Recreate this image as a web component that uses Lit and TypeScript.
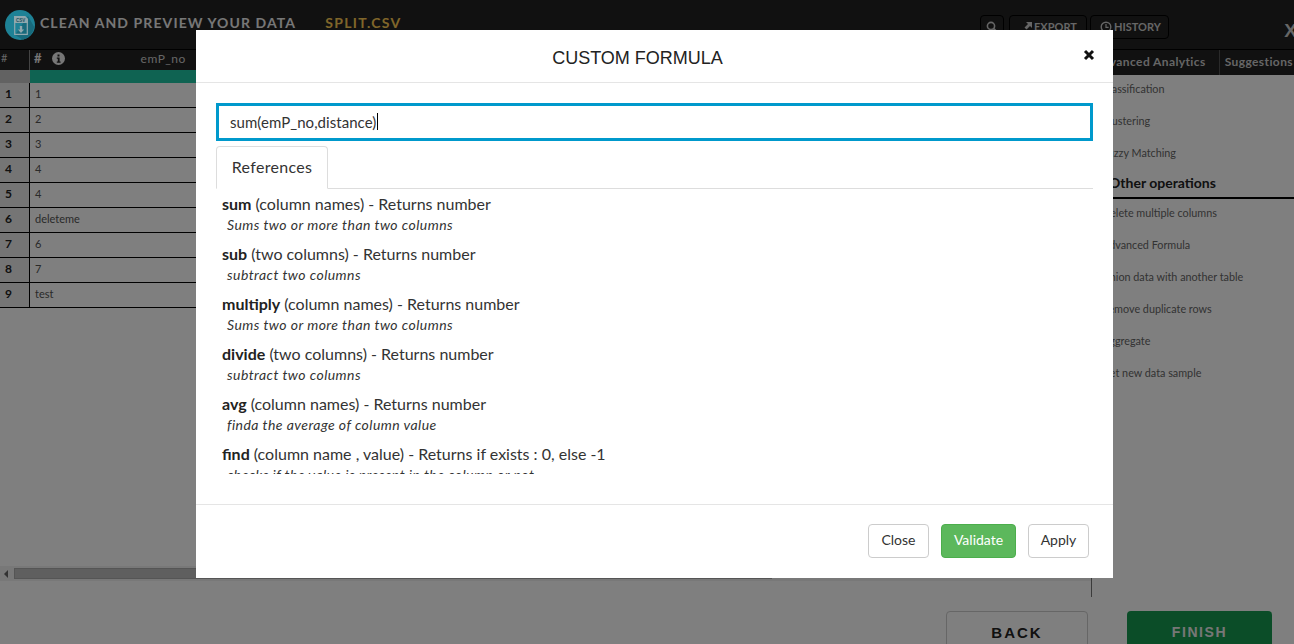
import { LitElement, html, css } from "lit";
import { customElement } from "lit/decorators.js";

const rows = ["1", "2", "3", "4", "4", "deleteme", "6", "7", "test"];
const refs = [
  ["sum", "(column names) - Returns number", "Sums two or more than two columns"],
  ["sub", "(two columns) - Returns number", "subtract two columns"],
  ["multiply", "(column names) - Returns number", "Sums two or more than two columns"],
  ["divide", "(two columns) - Returns number", "subtract two columns"],
  ["avg", "(column names) - Returns number", "finda the average of column value"],
  ["find", "(column name , value) - Returns if exists : 0, else -1", "checks if the value is present in the column or not"],
];
const ops1 = ["Classification", "Clustering", "Fuzzy Matching"];
const ops2 = ["Delete multiple columns", "Advanced Formula", "Union data with another table", "Remove duplicate rows", "Aggregate", "Get new data sample"];

@customElement("app-root")
export class AppRoot extends LitElement {
  static styles = css`
    :host { display: block; position: relative; width: 1294px; height: 644px; overflow: hidden; background: #fff; font-family: Lato, "Open Sans", sans-serif; color: #333; }
    .page { display: flex; flex-direction: column; height: 644px; }
    .top { flex: none; height: 50px; background: #222; display: flex; align-items: center; padding-left: 5px; box-sizing: border-box; border-bottom: 1px solid #000; }
    .logo { flex: none; width: 30px; height: 30px; display: block; margin-right: 5px; position: relative; z-index: 1; }
    .title { font-size: 14px; font-weight: 700; letter-spacing: 1.1px; color: #eee; white-space: nowrap; margin-bottom: 4px; }
    .file { font-size: 14px; font-weight: 700; letter-spacing: 1.3px; color: #fc5; margin-left: 29px; margin-bottom: 4px; }
    .actions { margin-left: auto; display: flex; margin-right: 125px; margin-top: 4px; }
    .tb { height: 24px; box-sizing: border-box; border: 1px solid #000; border-radius: 4px; background: #222; color: #ccc; display: flex; align-items: center; font-size: 11px; font-weight: 700; }
    .tb svg { display: block; }
    .tb.s { width: 24px; justify-content: center; margin-right: 5px; }
    .tb.e { width: 78px; padding-left: 10px; gap: 1px; margin-right: 3px; }
    .tb.h { width: 79px; padding-left: 9px; gap: 2px; }
    .x { position: absolute; right: -3px; top: 20px; font: 700 19px "Liberation Sans", sans-serif; color: #ccc; }
    .main { flex: none; height: 547px; display: flex; }
    .left { flex: 1; min-width: 0; display: flex; flex-direction: column; }
    .thead { flex: none; height: 20px; display: grid; grid-template-columns: 30px 1fr; background: #222; color: #eee; }
    .thead .a { font-size: 11px; padding: 1px 0 0 1px; border-right: 1px solid #888; color: #ccc; }
    .thead .b { display: flex; align-items: center; padding: 0 0 7px 4px; font-size: 13px; font-weight: 700; gap: 10px; }
    .thead .n { margin-left: 66px; font-weight: 400; font-size: 12px; letter-spacing: .5px; color: #ccc; }
    .teal { flex: none; height: 13px; display: grid; grid-template-columns: 30px 1fr; }
    .teal i { background: #c4c4c4; }
    .teal b { background: #1ec6a4; }
    .row { flex: none; height: 25px; box-sizing: border-box; display: grid; grid-template-columns: 30px 1fr; border-bottom: 1px solid #000; font-size: 11px; }
    .row .hd { background: #ebebeb; border-right: 1px solid #000; font-weight: 700; font-size: 12px; display: flex; align-items: center; padding: 0 0 4px 5px; color: #222; }
    .row .c { display: flex; align-items: center; padding: 0 0 4px 5px; color: #555; background: #fefefe; }
    .scroll { margin-top: auto; margin-bottom: 16px; height: 15px; flex: none; background: #f1f1f1; display: flex; align-items: center; }
    .arrow { width: 0; height: 0; border: 4px solid transparent; border-right: 4px solid #666; border-left: 0; margin: 0 6px 0 4px; }
    .thumb { height: 11px; width: 758px; background: #bebebe; border: 1px solid #aaa; box-sizing: border-box; }
    .right { flex: none; width: 203px; display: flex; flex-direction: column; border-left: 1px solid #777; box-sizing: border-box; }
    .tabs { flex: none; height: 25px; box-sizing: border-box; padding-bottom: 2px; background: #222; display: flex; justify-content: flex-end; font-size: 12px; letter-spacing: .4px; font-weight: 700; color: #ccc; white-space: nowrap; }
    .tabs span { display: flex; align-items: center; padding: 0 1px 0 5px; }
    .tabs .t1 { border-right: 1px solid #555; padding-right: 13px; margin-bottom: -2px; padding-bottom: 2px; }
    .op { height: 32px; flex: none; box-sizing: border-box; display: flex; align-items: center; padding: 0 0 6px 10px; font-size: 10.800px; color: #666; white-space: nowrap; }
    .oph { flex: none; font-size: 14px; font-weight: 700; color: #222; border-bottom: 2px solid #000; padding: 4px 0 7px 17px; height: 16px; margin-top: -1px; }
    .bottom { position: absolute; left: 946px; top: 611px; display: flex; gap: 39px; }
    .bk { width: 142px; height: 50px; box-sizing: border-box; border: 1px solid #ccc; border-radius: 4px; background: #fff; font-size: 15px; font-weight: 700; letter-spacing: 2px; text-align: center; padding-top: 12px; color: #222; font-family: "Liberation Sans", sans-serif; }
    .fn { width: 145px; height: 50px; box-sizing: border-box; border-radius: 4px; background: #169a50; font-size: 14px; font-weight: 700; letter-spacing: 1.600px; text-align: center; padding-top: 13px; color: #eee; font-family: "Liberation Sans", sans-serif; }
    .veil { position: absolute; inset: 0; background: rgba(0, 0, 0, .5); }
    .modal { position: absolute; left: 196px; top: 30px; width: 917px; height: 548px; background: #fff; display: flex; flex-direction: column; }
    .mh { flex: none; height: 53px; box-sizing: border-box; border-bottom: 1px solid #e5e5e5; display: flex; align-items: center; justify-content: center; padding: 4px 34px 0 0; font: 18px "Liberation Sans", sans-serif; color: #222; position: relative; }
    .close { position: absolute; right: 17px; top: 18px; width: 14px; height: 14px; display: block; }
    .mb { flex: 1; min-height: 0; padding: 20px 20px 0; display: flex; flex-direction: column; }
    .input { flex: none; height: 38px; box-sizing: border-box; border: 3px solid #0099cc; display: flex; align-items: center; padding: 0 0 1px 11px; font-size: 15px; letter-spacing: .05px; color: #333; }
    .caret { display: inline-block; width: 1px; height: 17px; background: #000; margin-left: 1px; }
    .tabbar { flex: none; height: 43px; margin-top: 5px; box-sizing: border-box; border-bottom: 1px solid #ddd; display: flex; }
    .tab { width: 112px; height: 43px; box-sizing: border-box; border: 1px solid #ddd; border-bottom-color: #fff; border-radius: 4px 4px 0 0; display: flex; align-items: center; justify-content: center; padding-bottom: 2px; font-size: 16px; letter-spacing: .3px; background: #fff; }
    .list { flex: none; height: 285px; overflow: hidden; padding: 5px 0 0 6px; box-sizing: border-box; }
    .ref { height: 50px; font-size: 16px; color: #333; white-space: nowrap; }
    .ref .l { height: 21px; line-height: 20px; }
    .ref b { color: #222; }
    .ref .d { font-style: italic; font-size: 14px; letter-spacing: .45px; height: 20px; line-height: 20px; padding-left: 5px; color: #333; }
    .mf { flex: none; height: 74px; box-sizing: border-box; border-top: 1px solid #e5e5e5; display: flex; justify-content: flex-end; align-items: flex-start; gap: 12px; padding: 19px 24px 0 0; }
    .btn { height: 34px; width: 61px; box-sizing: border-box; padding-bottom: 3px; border: 1px solid #ccc; border-radius: 4px; display: flex; align-items: center; justify-content: center; font-size: 14px; color: #333; background: #fff; }
    .btn.g { width: 75px; background: #5cb85c; border-color: #4cae4c; color: #fff; }
  `;

  render() {
    return html`
      <div class="page">
        <div class="top">
          <svg class="logo" viewBox="0 0 30 30">
            <circle cx="15" cy="15" r="15" fill="#1e8296"></circle>
            <path d="M23 6L29.200 17A15 15 0 0 1 18 29.700L10 25z" fill="#186a7c"></path>
            <path d="M9 6h11l3 3v4H9z" fill="#8fa8ae"></path>
            <path d="M9.700 6.700h10l2.600 2.600v15h-12.600z" fill="none" stroke="#8fa8ae" stroke-width="1.200"></path>
            <text x="11" y="11.500" font-size="4.500" font-weight="700" font-family="Liberation Sans" fill="#1e5260">CSV</text>
            <path d="M14.800 16h2.400v3.500h2l-3.200 3.600-3.200-3.600h2z" fill="#8fa8ae"></path>
          </svg>
          <span class="title">CLEAN AND PREVIEW YOUR DATA</span>
          <span class="file">SPLIT.CSV</span>
          <div class="actions">
            <div class="tb s">
              <svg width="12" height="12" viewBox="0 0 12 12"><circle cx="5" cy="5" r="3.600" fill="none" stroke="#ccc" stroke-width="1.600"></circle><path d="M7.600 7.600L11 11" stroke="#ccc" stroke-width="2"></path></svg>
            </div>
            <div class="tb e">
              <svg width="13" height="12" viewBox="0 0 13 12"><path d="M6 1h6v6L10 5 6.500 8.500 4.500 6.500 8 3z" fill="#ccc"></path><path d="M1 10h11v1.500H1z" fill="#ccc"></path></svg>
              <span>EXPORT</span>
            </div>
            <div class="tb h">
              <svg width="12" height="12" viewBox="0 0 12 12"><circle cx="6" cy="6" r="4.800" fill="none" stroke="#ccc" stroke-width="1.400"></circle><path d="M6 3v3.400h2.600" fill="none" stroke="#ccc" stroke-width="1.200"></path></svg>
              <span>HISTORY</span>
            </div>
          </div>
          <span class="x">X</span>
        </div>
        <div class="main">
          <div class="left">
            <div class="thead">
              <div class="a">#</div>
              <div class="b">
                <span>#</span>
                <svg width="13" height="13" viewBox="0 0 13 13"><circle cx="6.500" cy="6.500" r="6.500" fill="#eee"></circle><path d="M5.500 2.500h2v2h-2zM4.800 5.500h2.800v4h1v1.200H4.800V9.500h1V6.700h-1z" fill="#222"></path></svg>
                <span class="n">emP_no</span>
              </div>
            </div>
            <div class="teal"><i></i><b></b></div>
            ${rows.map((r, i) => html`<div class="row"><div class="hd">${i + 1}</div><div class="c">${r}</div></div>`)}
            <div class="scroll"><span class="arrow"></span><span class="thumb"></span></div>
          </div>
          <div class="right">
            <div class="tabs"><span class="t1">Advanced Analytics</span><span>Suggestions</span></div>
            ${ops1.map((o) => html`<div class="op">${o}</div>`)}
            <div class="oph">Other operations</div>
            ${ops2.map((o) => html`<div class="op">${o}</div>`)}
          </div>
        </div>
      </div>
      <div class="bottom">
        <div class="bk">BACK</div>
        <div class="fn">FINISH</div>
      </div>
      <div class="veil"></div>
      <div class="modal">
        <div class="mh">
          CUSTOM FORMULA
          <svg class="close" viewBox="0 0 14 14"><path d="M3 3l8 8M11 3l-8 8" stroke="#111" stroke-width="3"></path></svg>
        </div>
        <div class="mb">
          <div class="input"><span>sum(emP_no,distance)</span><span class="caret"></span></div>
          <div class="tabbar"><div class="tab">References</div></div>
          <div class="list">
            ${refs.map((r) => html`<div class="ref"><div class="l"><b>${r[0]}</b> ${r[1]}</div><div class="d">${r[2]}</div></div>`)}
          </div>
        </div>
        <div class="mf">
          <div class="btn">Close</div>
          <div class="btn g">Validate</div>
          <div class="btn">Apply</div>
        </div>
      </div>
    `;
  }
}
